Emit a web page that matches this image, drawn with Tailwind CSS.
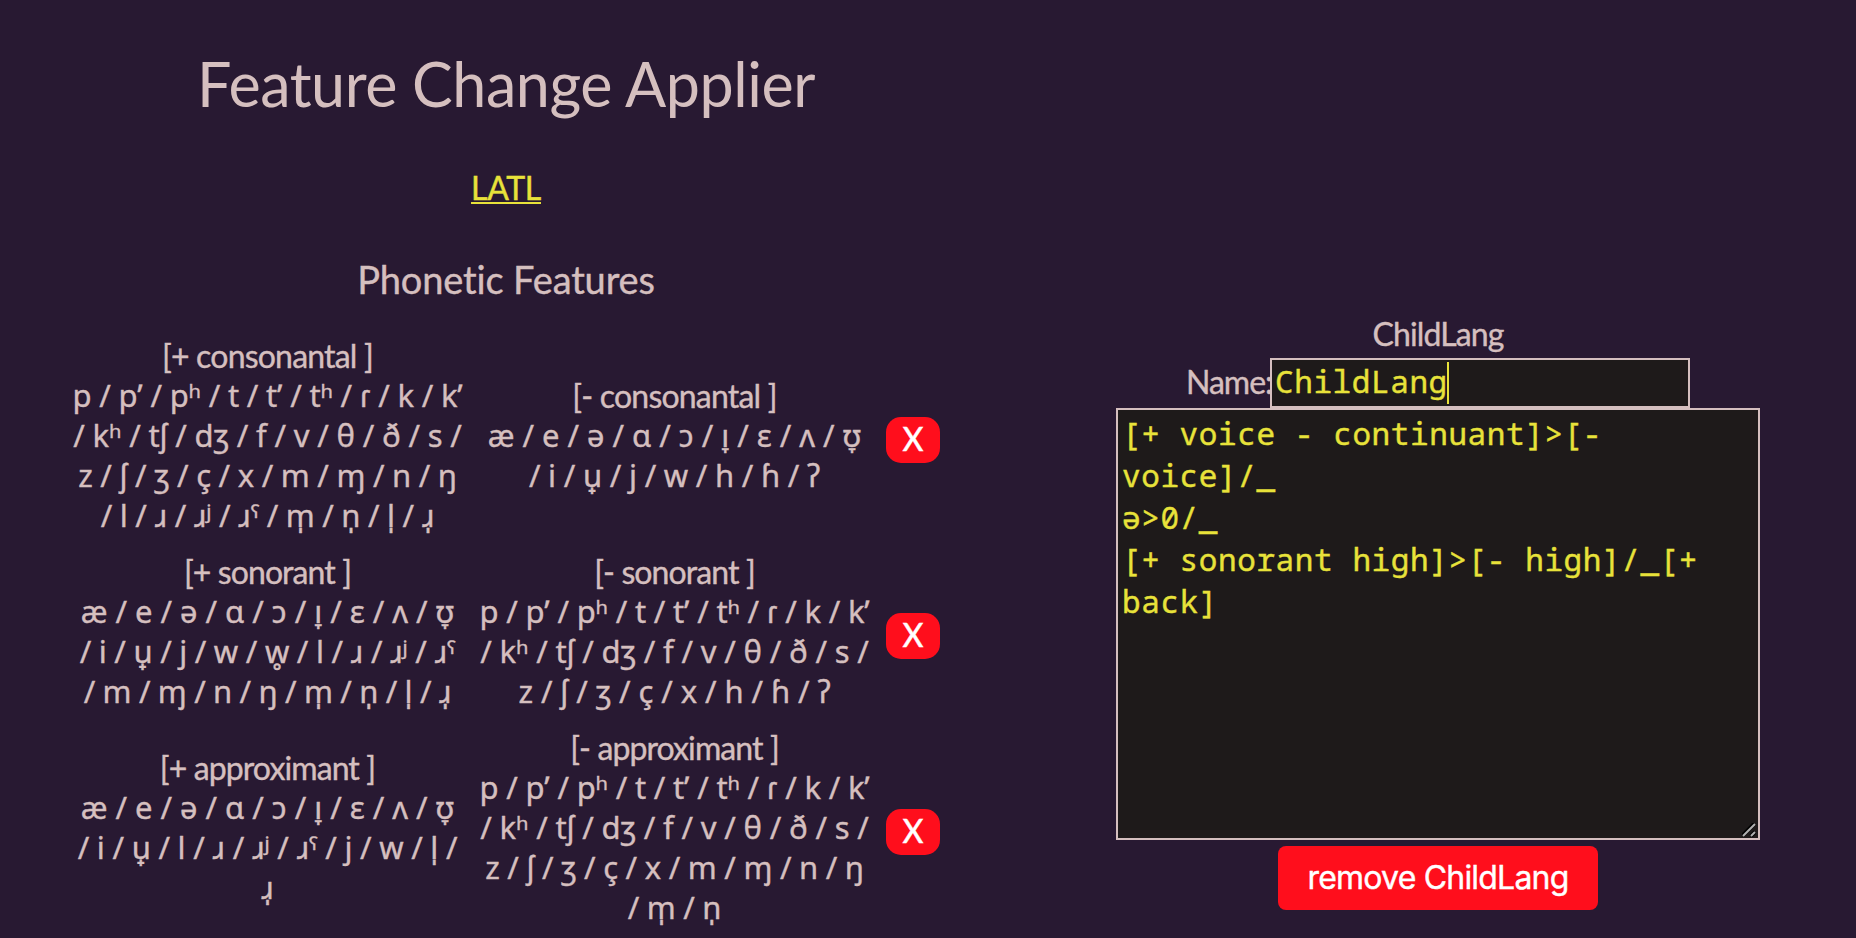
<!DOCTYPE html>
<html lang="en">
<head>
<meta charset="utf-8">
<title>Feature Change Applier</title>
<script src="https://cdn.jsdelivr.net/npm/@tailwindcss/browser@4"></script>
</head>
<body class="h-[938px] overflow-hidden bg-[#281932] font-['Lato','Noto_Sans',sans-serif] text-[32px] leading-[40px] text-[#d5bfbf] [-webkit-text-stroke:0.4px]">
<main class="flex h-[938px]">
  <section class="w-[1012px] shrink-0 pt-[48px] text-center">
    <h1 class="text-[61px] leading-[72px] tracking-[-0.45px] [-webkit-text-stroke:0px]">Feature Change Applier</h1>
    <p class="mt-[48px]"><a href="#" class="text-[#e8e23a] tracking-[-0.3px] underline decoration-2 underline-offset-[2px]">LATL</a></p>
    <h2 class="mt-[48px] text-[38px] leading-[46px] tracking-[-0.15px]">Phonetic Features</h2>

    <div class="mt-[33px] ml-[68px] flex flex-col gap-4 whitespace-nowrap">
      <div class="grid grid-cols-[399px_399px_54px] items-center gap-x-[8px]">
        <div>
          <h3 class="-mb-[2px] leading-[42px] tracking-[-0.8px]">[+ consonantal ]</h3>
          <div class="font-['Noto_Sans',sans-serif] text-[31px]">
            <p class="tracking-[-0.18px]">p / pʼ / pʰ / t / tʼ / tʰ / ɾ / k / kʼ</p>
            <p class="tracking-[-0.15px]">/ kʰ / tʃ / dʒ / f / v / θ / ð / s /</p>
            <p class="tracking-[-0.25px]">z / ʃ / ʒ / ç / x / m / ɱ / n / ŋ</p>
            <p class="tracking-[-0.27px]">/ l / ɹ / ɹʲ / ɹˤ / m̩ / n̩ / l̩ / ɹ̩</p>
          </div>
        </div>
        <div>
          <h3 class="-mb-[2px] leading-[42px] tracking-[-0.8px]">[- consonantal ]</h3>
          <div class="font-['Noto_Sans',sans-serif] text-[31px]">
            <p class="tracking-[-0.02px]">æ / e / ə / ɑ / ɔ / ı̞ / ɛ / ʌ / ʊ̞</p>
            <p class="tracking-[-0.2px]">/ i / u̟ / j / w / h / ɦ / ʔ</p>
          </div>
        </div>
        <button class="mt-[10px] ml-1 h-[46px] w-[54px] rounded-[15px] bg-[#ff0e1c] pb-[2px] font-medium text-white">X</button>
      </div>

      <div class="grid grid-cols-[399px_399px_54px] items-center gap-x-[8px]">
        <div>
          <h3 class="-mb-[2px] leading-[42px] tracking-[-0.9px]">[+ sonorant ]</h3>
          <div class="font-['Noto_Sans',sans-serif] text-[31px]">
            <p class="tracking-[-0.02px]">æ / e / ə / ɑ / ɔ / ı̞ / ɛ / ʌ / ʊ̞</p>
            <p class="tracking-[-0.25px]">/ i / u̟ / j / w / w̥ / l / ɹ / ɹʲ / ɹˤ</p>
            <p class="tracking-[-0.35px]">/ m / ɱ / n / ŋ / m̩ / n̩ / l̩ / ɹ̩</p>
          </div>
        </div>
        <div>
          <h3 class="-mb-[2px] leading-[42px] tracking-[-0.9px]">[- sonorant ]</h3>
          <div class="font-['Noto_Sans',sans-serif] text-[31px]">
            <p class="tracking-[-0.18px]">p / pʼ / pʰ / t / tʼ / tʰ / ɾ / k / kʼ</p>
            <p class="tracking-[-0.15px]">/ kʰ / tʃ / dʒ / f / v / θ / ð / s /</p>
            <p class="tracking-[-0.08px]">z / ʃ / ʒ / ç / x / h / ɦ / ʔ</p>
          </div>
        </div>
        <button class="mt-[10px] ml-1 h-[46px] w-[54px] rounded-[15px] bg-[#ff0e1c] pb-[2px] font-medium text-white">X</button>
      </div>

      <div class="grid grid-cols-[399px_399px_54px] items-center gap-x-[8px]">
        <div>
          <h3 class="-mb-[2px] leading-[42px] tracking-[-0.9px]">[+ approximant ]</h3>
          <div class="font-['Noto_Sans',sans-serif] text-[31px]">
            <p class="tracking-[-0.02px]">æ / e / ə / ɑ / ɔ / ı̞ / ɛ / ʌ / ʊ̞</p>
            <p class="tracking-[-0.22px]">/ i / u̟ / l / ɹ / ɹʲ / ɹˤ / j / w / l̩ /</p>
            <p>ɹ̩</p>
          </div>
        </div>
        <div>
          <h3 class="-mb-[2px] leading-[42px] tracking-[-0.9px]">[- approximant ]</h3>
          <div class="font-['Noto_Sans',sans-serif] text-[31px]">
            <p class="tracking-[-0.18px]">p / pʼ / pʰ / t / tʼ / tʰ / ɾ / k / kʼ</p>
            <p class="tracking-[-0.15px]">/ kʰ / tʃ / dʒ / f / v / θ / ð / s /</p>
            <p class="tracking-[-0.25px]">z / ʃ / ʒ / ç / x / m / ɱ / n / ŋ</p>
            <p class="tracking-[-0.3px]">/ m̩ / n̩</p>
          </div>
        </div>
        <button class="mt-[10px] ml-1 h-[46px] w-[54px] rounded-[15px] bg-[#ff0e1c] pb-[2px] font-medium text-white">X</button>
      </div>
    </div>
  </section>

  <section class="ml-[104px] flex w-[644px] flex-col items-center pt-[314px]">
    <p class="tracking-[-0.9px]">ChildLang</p>
    <div class="mt-[4px] flex h-[50px]">
      <label class="w-[84px] pt-[4px] tracking-[-1px] whitespace-nowrap">Name:</label>
      <div class="flex w-[420px] border-2 border-[#d5bfbf] bg-[#1e1a1a] pl-[3px] font-['Noto_Sans_Mono','DejaVu_Sans_Mono',monospace] text-[31px] leading-[42px] tracking-[0.6px] text-[#e8e23a]">ChildLang<span class="-ml-px mt-[2px] h-[42px] w-[2px] bg-[#e8e23a]"></span></div>
    </div>
    <div class="relative h-[432px] w-[644px] border-2 border-[#d5bfbf] bg-[#1e1a1a] pt-[2px] pl-[4px] font-['Noto_Sans_Mono','DejaVu_Sans_Mono',monospace] text-[31px] leading-[42px] tracking-[0.6px] text-[#e8e23a]">
      <p>[+ voice - continuant]&gt;[-<br>voice]/_<br>ə&gt;0/_<br>[+ sonorant high]&gt;[- high]/_[+<br>back]</p>
      <svg class="absolute right-[2px] bottom-px h-[14px] w-[14px]" viewBox="0 0 14 14" fill="none">
        <path d="M0.5 12.5L12.5 0.5M9 13L13 9" stroke="#000" stroke-width="4"/>
        <path d="M1 13L13 1M9 13L13 9" stroke="#b0b0b0" stroke-width="2"/>
      </svg>
    </div>
    <button class="mt-[6px] h-[64px] w-[320px] rounded-[8px] bg-[#ff0e1c] font-['Inter',sans-serif] text-[32px] tracking-[-0.8px] text-white">remove ChildLang</button>
  </section>
</main>
</body>
</html>
